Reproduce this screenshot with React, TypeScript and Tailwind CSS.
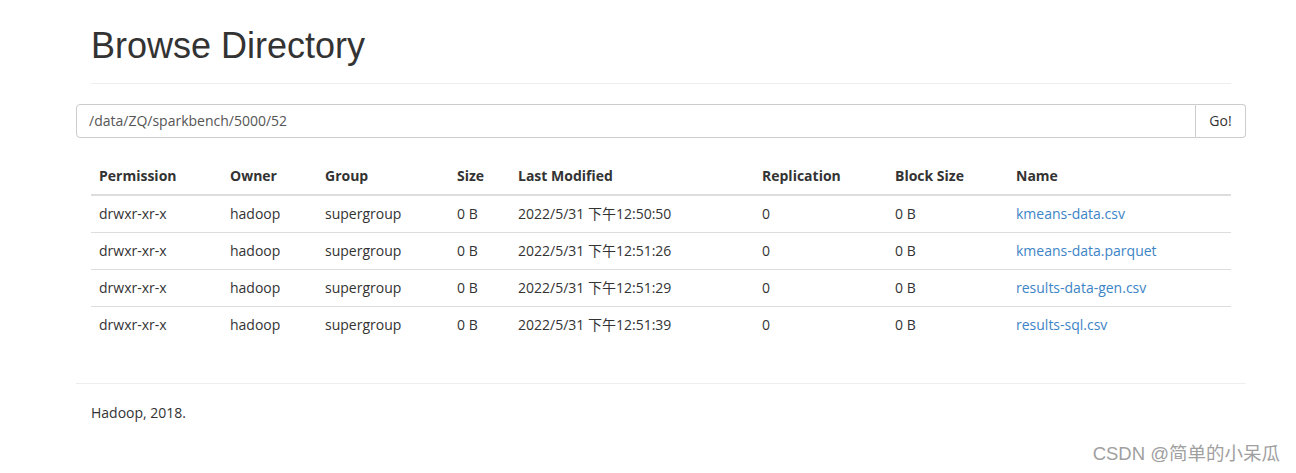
import React from "react";

const rows = [
  { time: "2022/5/31 下午12:50:50", name: "kmeans-data.csv" },
  { time: "2022/5/31 下午12:51:26", name: "kmeans-data.parquet" },
  { time: "2022/5/31 下午12:51:29", name: "results-data-gen.csv" },
  { time: "2022/5/31 下午12:51:39", name: "results-sql.csv" },
];

const bodyFont = { fontFamily: '"Open Sans", "Noto Sans CJK SC", sans-serif' };

export default function App() {
  return (
    <div
      className="relative w-[1296px] h-[473px] bg-white text-[#333] text-[14px] leading-[20px] overflow-hidden"
      style={bodyFont}
    >
      <div className="w-[1170px] ml-[76px] px-[15px]">
        <div className="border-b border-[#eee] pb-[17px]">
          <h1
            className="mt-[26px] text-[36px] leading-[39.6px] font-normal text-[#333]"
            style={{ fontFamily: '"Liberation Sans", Arial, sans-serif' }}
          >
            Browse Directory
          </h1>
        </div>

        <div className="-mx-[15px] mt-[20px] flex h-[34px]">
          <input
            className="flex-1 h-[34px] border border-[#ccc] rounded-l-[4px] px-[12px] text-[14px] text-[#555] outline-none"
            style={bodyFont}
            defaultValue="/data/ZQ/sparkbench/5000/52"
          />
          <button className="w-[50px] h-[34px] border border-l-0 border-[#ccc] rounded-r-[4px] bg-white text-[14px] text-[#333]">
            Go!
          </button>
        </div>

        <table className="mt-[20px] w-[1140px] table-fixed border-collapse">
          <thead>
            <tr className="border-b-2 border-[#ddd]">
              <th className="w-[131px] p-[8px] text-left font-bold">Permission</th>
              <th className="w-[95px] p-[8px] text-left font-bold">Owner</th>
              <th className="w-[132px] p-[8px] text-left font-bold">Group</th>
              <th className="w-[61px] p-[8px] text-left font-bold">Size</th>
              <th className="w-[244px] p-[8px] text-left font-bold">Last Modified</th>
              <th className="w-[133px] p-[8px] text-left font-bold">Replication</th>
              <th className="w-[121px] p-[8px] text-left font-bold">Block Size</th>
              <th className="w-[223px] p-[8px] text-left font-bold">Name</th>
            </tr>
          </thead>
          <tbody>
            {rows.map((r, i) => (
              <tr key={r.name} className={i > 0 ? "border-t border-[#ddd]" : ""}>
                <td className="p-[8px]">drwxr-xr-x</td>
                <td className="p-[8px]">hadoop</td>
                <td className="p-[8px]">supergroup</td>
                <td className="p-[8px]">0 B</td>
                <td className="p-[8px]">{r.time}</td>
                <td className="p-[8px]">0</td>
                <td className="p-[8px]">0 B</td>
                <td className="p-[8px]">
                  <a className="text-[#3d84c6]" href="#">
                    {r.name}
                  </a>
                </td>
              </tr>
            ))}
          </tbody>
        </table>

        <div className="-mx-[15px] mt-[40px] border-t border-[#eee] pt-[19px] px-[15px]">
          <p>Hadoop, 2018.</p>
        </div>
      </div>

      <div
        className="absolute right-[16px] top-[441px] text-[18.5px] leading-[26px] text-[#a0a0a0]"
        style={{ fontFamily: '"Liberation Sans", "Noto Sans CJK SC", sans-serif', textShadow: "0 0 1px #fff" }}
      >
        CSDN @简单的小呆瓜
      </div>
    </div>
  );
}
